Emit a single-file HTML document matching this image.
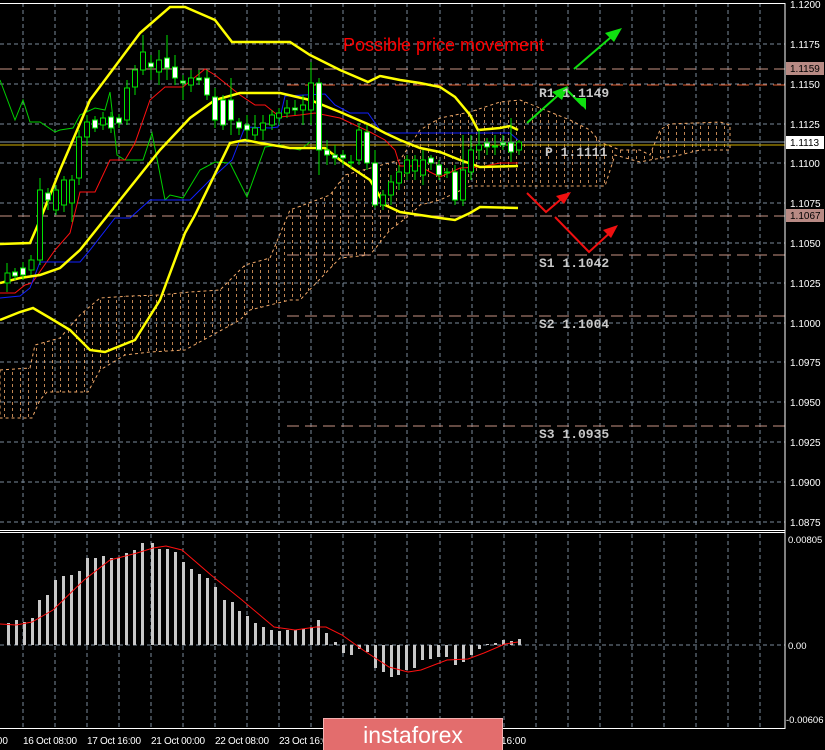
<!DOCTYPE html>
<html><head><meta charset="utf-8"><style>
html,body{margin:0;padding:0;background:#000;width:825px;height:750px;overflow:hidden}
svg{display:block}
text{font-family:"Liberation Sans",sans-serif}
text.mono{font-family:"Liberation Mono",monospace;font-weight:bold}
</style></head><body>
<svg width="825" height="750" viewBox="0 0 825 750" xmlns="http://www.w3.org/2000/svg">
<defs>
<pattern id="hatch" width="8" height="6" patternUnits="userSpaceOnUse">
<line x1="4.5" y1="0" x2="4.5" y2="3" stroke="#f0a868" stroke-width="1" stroke-opacity="0.8"/>
</pattern>
<clipPath id="pc"><rect x="0" y="3" width="785" height="526"/></clipPath>
<clipPath id="mc"><rect x="0" y="534" width="785" height="194"/></clipPath>
</defs>
<rect width="825" height="750" fill="#000"/>
<g stroke="#7a8a9a" stroke-width="1" stroke-dasharray="4,3">
<path d="M0 44H785M0 84H785M0 124H785M0 163H785M0 203H785M0 243H785M0 283H785M0 323H785M0 362H785M0 402H785M0 442H785M0 482H785M0 522H785"/>
<path d="M23 3V528M55 3V528M87 3V528M119 3V528M151 3V528M183 3V528M215 3V528M247 3V528M279 3V528M311 3V528M343 3V528M375 3V528M407 3V528M440 3V528M472 3V528M504 3V528M536 3V528M568 3V528M600 3V528M632 3V528M664 3V528M696 3V528M728 3V528M760 3V528"/>
<path d="M23 534V728M55 534V728M87 534V728M119 534V728M151 534V728M183 534V728M215 534V728M247 534V728M279 534V728M311 534V728M343 534V728M375 534V728M407 534V728M440 534V728M472 534V728M504 534V728M536 534V728M568 534V728M600 534V728M632 534V728M664 534V728M696 534V728M728 534V728M760 534V728"/>
<path d="M0 645H785"/>
</g>
<g clip-path="url(#pc)">
<polygon points="0,370 30,368 35,345 60,338 80,315 100,298 130,296 160,295 190,292 220,290 245,265 270,258 290,210 330,195 345,175 400,160 420,130 440,118 470,112 500,102 520,100 550,112 570,120 590,130 600,142 620,150 640,150 650,155 660,130 670,124 720,122 730,125 730,150 700,150 680,155 650,160 640,162 615,155 605,186 560,186 500,186 470,186 440,200 420,205 410,215 390,230 370,255 340,258 300,300 290,300 250,310 240,320 185,350 150,352 125,355 100,370 88,392 47,392 40,400 32,418 0,418" fill="url(#hatch)" stroke="#f0a868" stroke-width="1" stroke-dasharray="3,3"/>
<g stroke-width="1" stroke-dasharray="12,6">
<path d="M0 69H785" stroke="#c89484"/>
<path d="M287 85H785" stroke="#e05a2a"/>
<path d="M0 216H785" stroke="#c89484"/>
<path d="M287 255H785" stroke="#c89484"/>
<path d="M287 316H785" stroke="#c89484"/>
<path d="M287 426H785" stroke="#c89484"/>
</g>
<path d="M0 142H785" stroke="#8a9aa8" stroke-width="1"/>
<path d="M0 145H785" stroke="#d4b000" stroke-width="1"/>
<polyline fill="none" stroke="#00d000" stroke-width="1" points="0,80 15,120 23,100 30,122 40,122 55,132 60,130 73,128 80,115 95,108 105,110 110,92 117,155 125,160 143,160 152,133 165,200 170,195 183,198 200,170 215,162 230,163 247,197 265,147 280,145 290,148 300,150 310,142"/>
<polyline fill="none" stroke="#ff1010" stroke-width="1" points="0,293 15,293 25,285 32,283 55,250 70,233 80,192 95,192 110,160 125,160 135,143 150,100 165,87 183,87 205,69 215,75 240,95 255,105 265,105 280,117 300,115 315,113 340,118 370,132 385,140 395,150 400,166 420,166 430,172 440,177 460,168 480,167 500,163 518,163"/>
<polyline fill="none" stroke="#1020ff" stroke-width="1" points="0,298 20,296 30,288 40,262 80,262 90,250 115,218 130,218 150,200 190,200 210,180 232,160 245,127 270,128 278,127 285,96 325,94 335,105 350,113 368,113 380,130 385,133 420,133 510,133 518,140"/>
<g fill="none" stroke="#ffff00" stroke-width="2.5">
<polyline points="0,244 30,243 40,220 60,170 90,100 140,33 170,7 185,7 215,20 232,42 290,42 310,55 340,70 368,82 380,76 400,80 420,83 440,87 455,97 470,115 478,130 500,128 510,126 518,130"/>
<polyline points="0,283 20,278 40,275 60,268 80,250 120,200 160,150 190,118 215,100 240,93 280,93 310,100 340,112 370,125 385,133 400,140 420,148 440,152 460,160 480,167 518,166"/>
<polyline points="0,320 20,312 33,308 50,318 70,330 90,350 105,352 135,340 160,300 185,233 195,215 230,143 245,140 260,143 290,148 325,148 340,160 355,170 370,180 385,205 400,212 420,215 440,218 455,220 470,213 480,207 518,208"/>
</g>
<g stroke="#00e000" stroke-width="1">
<path d="M7 263V292M15 268V280M23 262V280M31 255V275M40 178V265M48 188V210M56 185V215M64 176V212M72 175V222M79 130V185M87 115V145M95 116V132M103 112V130M111 112V133M119 114V128M127 80V125M135 65V95M143 35V75M151 55V80M159 50V85M167 35V80M175 55V85M183 75V100M191 70V92M199 70V85M207 70V100M215 88V128M223 95V130M231 78V135M239 118V135M247 115V140M255 115V140M263 115V140M272 110V130M279 108V125M287 100V118M295 100V115M303 95V125M311 62V125M319 78V175M327 140V165M335 145V165M343 150V165M351 155V168M359 123V165M367 125V170M375 150V208M383 190V210M391 175V205M399 165V190M407 155V180M415 155V180M423 150V185M431 155V170M439 160V180M447 168V178M455 165V205M463 135V206M471 135V180M479 130V160M487 138V155M495 135V155M503 135V150M511 118V162M519 140V155"/>
</g>
<g stroke="#00e000" stroke-width="1" fill="#000">
<rect x="5" y="273" width="5" height="10"/><rect x="29" y="260" width="5" height="10"/><rect x="37.5" y="190" width="5" height="70"/><rect x="53.5" y="190" width="5" height="20"/><rect x="61.5" y="180" width="5" height="25"/><rect x="69.5" y="180" width="5" height="23"/><rect x="76.5" y="137" width="5" height="41"/><rect x="84.5" y="122" width="5" height="15"/><rect x="100.5" y="118" width="5" height="7"/><rect x="124.5" y="88" width="5" height="32"/><rect x="132.5" y="70" width="5" height="17"/><rect x="140.5" y="52" width="5" height="18"/><rect x="156.5" y="60" width="5" height="12"/><rect x="188.5" y="78" width="5" height="7"/><rect x="252.5" y="128" width="5" height="7"/><rect x="260.5" y="123" width="5" height="7"/><rect x="269.5" y="115" width="5" height="10"/><rect x="276.5" y="113" width="5" height="5"/><rect x="284.5" y="108" width="5" height="5"/><rect x="300.5" y="105" width="5" height="5"/><rect x="308.5" y="83" width="5" height="27"/><rect x="356.5" y="130" width="5" height="30"/><rect x="380.5" y="195" width="5" height="10"/><rect x="388.5" y="182" width="5" height="13"/><rect x="396.5" y="172" width="5" height="11"/><rect x="404.5" y="160" width="5" height="13"/><rect x="412.5" y="160" width="5" height="11"/><rect x="420.5" y="160" width="5" height="15"/><rect x="460.5" y="170" width="5" height="30"/><rect x="468.5" y="150" width="5" height="22"/><rect x="476.5" y="145" width="5" height="5"/><rect x="516.5" y="142" width="5" height="8"/>
</g>
<g stroke="#00e000" stroke-width="1" fill="#fff">
<rect x="12.5" y="272" width="5" height="4"/><rect x="20.5" y="268" width="5" height="7"/><rect x="45.5" y="193" width="5" height="7"/><rect x="92.5" y="120" width="5" height="8"/><rect x="108.5" y="117" width="5" height="11"/><rect x="116.5" y="118" width="5" height="5"/><rect x="148.5" y="63" width="5" height="4"/><rect x="164.5" y="58" width="5" height="10"/><rect x="172.5" y="67" width="5" height="11"/><rect x="180.5" y="81" width="5" height="2"/><rect x="196.5" y="78" width="5" height="2"/><rect x="204.5" y="78" width="5" height="17"/><rect x="212.5" y="97" width="5" height="23"/><rect x="220.5" y="100" width="5" height="25"/><rect x="228.5" y="100" width="5" height="20"/><rect x="236.5" y="122" width="5" height="6"/><rect x="244.5" y="125" width="5" height="5"/><rect x="292.5" y="108" width="5" height="2"/><rect x="316.5" y="83" width="5" height="67"/><rect x="324.5" y="150" width="5" height="5"/><rect x="332.5" y="155" width="5" height="3"/><rect x="340.5" y="155" width="5" height="3"/><rect x="348.5" y="162" width="5" height="1"/><rect x="364.5" y="132" width="5" height="31"/><rect x="372.5" y="163" width="5" height="42"/><rect x="428.5" y="158" width="5" height="5"/><rect x="436.5" y="165" width="5" height="10"/><rect x="444.5" y="172" width="5" height="1"/><rect x="452.5" y="172" width="5" height="28"/><rect x="484.5" y="143" width="5" height="4"/><rect x="492.5" y="146" width="5" height="1"/><rect x="500.5" y="143" width="5" height="2"/><rect x="508.5" y="143" width="5" height="9"/>
</g>
<g stroke="#10e010" stroke-width="2" fill="none">
<path d="M574 69L617 32"/><path d="M527 123L564 90"/><path d="M566 89L583 106"/>
</g>
<g fill="#10e010">
<polygon points="622,28 605,33 614,42"/><polygon points="568,86 552,92 562,100"/><polygon points="586,110 575,98 586,98"/>
</g>
<g stroke="#f01010" stroke-width="2" fill="none">
<path d="M527 193L546 212L566 195"/><path d="M555 217L589 252L614 229"/>
</g>
<g fill="#f01010">
<polygon points="571,192 556,196 564,204"/><polygon points="618,225 603,230 611,238"/>
</g>
<text x="343" y="51" font-size="18" fill="#ff0000">Possible price movement</text>
<g fill="#c8c8c8" font-size="13">
<text class="mono" x="539" y="97">R1 1.1149</text><text class="mono" x="545" y="156">P 1.1111</text><text class="mono" x="539" y="267">S1 1.1042</text><text class="mono" x="539" y="328">S2 1.1004</text><text class="mono" x="539" y="438">S3 1.0935</text>
</g>
</g>
<g clip-path="url(#mc)" fill="#c8c8c8">
<rect x="7" y="623" width="3" height="22"/><rect x="15" y="620" width="3" height="25"/><rect x="23" y="622" width="3" height="23"/><rect x="31" y="618" width="3" height="27"/><rect x="38" y="600" width="3" height="45"/><rect x="46" y="595" width="3" height="50"/><rect x="54" y="580" width="3" height="65"/><rect x="62" y="576" width="3" height="69"/><rect x="70" y="575" width="3" height="70"/><rect x="78" y="571" width="3" height="74"/><rect x="86" y="558" width="3" height="87"/><rect x="94" y="558" width="3" height="87"/><rect x="102" y="556" width="3" height="89"/><rect x="110" y="558" width="3" height="87"/><rect x="117" y="558" width="3" height="87"/><rect x="125" y="553" width="3" height="92"/><rect x="133" y="550" width="3" height="95"/><rect x="141" y="543" width="3" height="102"/><rect x="151" y="543" width="3" height="102"/><rect x="158" y="549" width="3" height="96"/><rect x="166" y="549" width="3" height="96"/><rect x="174" y="552" width="3" height="93"/><rect x="182" y="562" width="3" height="83"/><rect x="190" y="569" width="3" height="76"/><rect x="198" y="574" width="3" height="71"/><rect x="206" y="578" width="3" height="67"/><rect x="214" y="587" width="3" height="58"/><rect x="223" y="600" width="3" height="45"/><rect x="231" y="602" width="3" height="43"/><rect x="238" y="611" width="3" height="34"/><rect x="246" y="616" width="3" height="29"/><rect x="254" y="623" width="3" height="22"/><rect x="262" y="627" width="3" height="18"/><rect x="270" y="630" width="3" height="15"/><rect x="278" y="631" width="3" height="14"/><rect x="286" y="630" width="3" height="15"/><rect x="294" y="630" width="3" height="15"/><rect x="302" y="629" width="3" height="16"/><rect x="310" y="627" width="3" height="18"/><rect x="317" y="620" width="3" height="25"/><rect x="325" y="633" width="3" height="12"/><rect x="334" y="642" width="3" height="3"/><rect x="342" y="645" width="3" height="8"/><rect x="350" y="645" width="3" height="10"/><rect x="358" y="645" width="3" height="4"/><rect x="366" y="645" width="3" height="7"/><rect x="374" y="645" width="3" height="23"/><rect x="382" y="645" width="3" height="27"/><rect x="390" y="645" width="3" height="32"/><rect x="397" y="645" width="3" height="30"/><rect x="405" y="645" width="3" height="25"/><rect x="413" y="645" width="3" height="23"/><rect x="421" y="645" width="3" height="15"/><rect x="429" y="645" width="3" height="14"/><rect x="437" y="645" width="3" height="12"/><rect x="445" y="645" width="3" height="12"/><rect x="454" y="645" width="3" height="20"/><rect x="462" y="645" width="3" height="17"/><rect x="470" y="645" width="3" height="10"/><rect x="478" y="645" width="3" height="4"/><rect x="486" y="644" width="3" height="1"/><rect x="494" y="643" width="3" height="2"/><rect x="502" y="640" width="3" height="5"/><rect x="510" y="641" width="3" height="4"/><rect x="518" y="639" width="3" height="6"/>
</g>
<polyline fill="none" stroke="#ff1010" stroke-width="1" points="0,624 16,625 32,622 53,610 84,580 110,560 137,553 153,548 166,546 182,550 211,575 242,600 274,627 295,630 316,627 326,627 342,635 363,650 389,667 408,672 421,670 447,660 468,659 484,653 505,644 518,642"/>
<path d="M785 3V729" stroke="#fff" stroke-width="1"/>
<path d="M0 3.5H785" stroke="#fff" stroke-width="1"/>
<path d="M0 530.5H785M0 532.5H785M0 728.5H785" stroke="#fff" stroke-width="1"/>
<g fill="#fff" font-size="10">
<text x="790" y="8">1.1200</text><text x="790" y="48">1.1175</text><text x="790" y="88">1.1150</text><text x="790" y="128">1.1125</text><text x="790" y="167">1.1100</text><text x="790" y="207">1.1075</text><text x="790" y="247">1.1050</text><text x="790" y="287">1.1025</text><text x="790" y="327">1.1000</text><text x="790" y="366">1.0975</text><text x="790" y="406">1.0950</text><text x="790" y="446">1.0925</text><text x="790" y="486">1.0900</text><text x="790" y="526">1.0875</text>
<text x="788" y="543" font-size="9.5">0.00805</text><text x="788" y="649" font-size="9.5">0.00</text><text x="786" y="723" font-size="9.5">-0.00606</text>
</g>
<rect x="786" y="62" width="38" height="13" fill="#b88a84"/><text x="790" y="72" font-size="10" fill="#000">1.1159</text>
<rect x="786" y="136" width="38" height="13" fill="#fff"/><text x="790" y="146" font-size="10" fill="#000">1.1113</text>
<rect x="786" y="209" width="38" height="13" fill="#b88a84"/><text x="790" y="219" font-size="10" fill="#000">1.1067</text>
<g fill="#fff" font-size="10">
<text x="-6" y="744">:00</text><text x="23" y="744" textLength="54">16 Oct 08:00</text><text x="87" y="744" textLength="54">17 Oct 16:00</text><text x="151" y="744" textLength="54">21 Oct 00:00</text><text x="215" y="744" textLength="54">22 Oct 08:00</text><text x="279" y="744" textLength="54">23 Oct 16:00</text><text x="501" y="744">16:00</text>
</g>
<rect x="323.5" y="718.5" width="179" height="33" fill="#e36d6d" stroke="#f4b0b0" stroke-width="1"/>
<text x="413" y="743" font-size="23" fill="#fff" text-anchor="middle">instaforex</text>
</svg>
</body></html>
